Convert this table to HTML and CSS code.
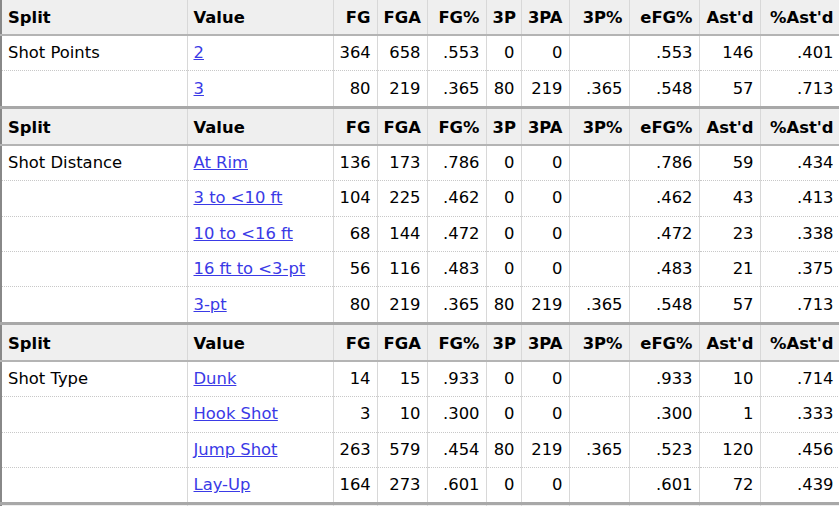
FILE: index.html
```html
<!DOCTYPE html>
<html>
<head>
<meta charset="utf-8">
<link rel="stylesheet" href="styles.css">
</head>
<body>
<table class="stats">
<colgroup>
<col class="c-split"><col class="c-value"><col class="c-fg"><col class="c-fga"><col class="c-fgp"><col class="c-3p"><col class="c-3pa"><col class="c-3pp"><col class="c-efg"><col class="c-ast"><col class="c-pct">
</colgroup>
<tbody>
<tr class="head first"><th class="l">Split</th><th class="l">Value</th><th>FG</th><th>FGA</th><th>FG%</th><th>3P</th><th>3PA</th><th>3P%</th><th>eFG%</th><th>Ast'd</th><th>%Ast'd</th></tr>
<tr><td class="l">Shot Points</td><td class="l"><a href="#">2</a></td><td>364</td><td>658</td><td>.553</td><td>0</td><td>0</td><td></td><td>.553</td><td>146</td><td>.401</td></tr>
<tr class="last"><td class="l"></td><td class="l"><a href="#">3</a></td><td>80</td><td>219</td><td>.365</td><td>80</td><td>219</td><td>.365</td><td>.548</td><td>57</td><td>.713</td></tr>
<tr class="head"><th class="l">Split</th><th class="l">Value</th><th>FG</th><th>FGA</th><th>FG%</th><th>3P</th><th>3PA</th><th>3P%</th><th>eFG%</th><th>Ast'd</th><th>%Ast'd</th></tr>
<tr><td class="l">Shot Distance</td><td class="l"><a href="#">At Rim</a></td><td>136</td><td>173</td><td>.786</td><td>0</td><td>0</td><td></td><td>.786</td><td>59</td><td>.434</td></tr>
<tr><td class="l"></td><td class="l"><a href="#">3 to &lt;10 ft</a></td><td>104</td><td>225</td><td>.462</td><td>0</td><td>0</td><td></td><td>.462</td><td>43</td><td>.413</td></tr>
<tr><td class="l"></td><td class="l"><a href="#">10 to &lt;16 ft</a></td><td>68</td><td>144</td><td>.472</td><td>0</td><td>0</td><td></td><td>.472</td><td>23</td><td>.338</td></tr>
<tr><td class="l"></td><td class="l"><a href="#">16 ft to &lt;3-pt</a></td><td>56</td><td>116</td><td>.483</td><td>0</td><td>0</td><td></td><td>.483</td><td>21</td><td>.375</td></tr>
<tr class="last"><td class="l"></td><td class="l"><a href="#">3-pt</a></td><td>80</td><td>219</td><td>.365</td><td>80</td><td>219</td><td>.365</td><td>.548</td><td>57</td><td>.713</td></tr>
<tr class="head"><th class="l">Split</th><th class="l">Value</th><th>FG</th><th>FGA</th><th>FG%</th><th>3P</th><th>3PA</th><th>3P%</th><th>eFG%</th><th>Ast'd</th><th>%Ast'd</th></tr>
<tr><td class="l">Shot Type</td><td class="l"><a href="#">Dunk</a></td><td>14</td><td>15</td><td>.933</td><td>0</td><td>0</td><td></td><td>.933</td><td>10</td><td>.714</td></tr>
<tr><td class="l"></td><td class="l"><a href="#">Hook Shot</a></td><td>3</td><td>10</td><td>.300</td><td>0</td><td>0</td><td></td><td>.300</td><td>1</td><td>.333</td></tr>
<tr><td class="l"></td><td class="l"><a href="#">Jump Shot</a></td><td>263</td><td>579</td><td>.454</td><td>80</td><td>219</td><td>.365</td><td>.523</td><td>120</td><td>.456</td></tr>
<tr class="last"><td class="l"></td><td class="l"><a href="#">Lay-Up</a></td><td>164</td><td>273</td><td>.601</td><td>0</td><td>0</td><td></td><td>.601</td><td>72</td><td>.439</td></tr>
<tr class="head tail"><th></th><th></th><th></th><th></th><th></th><th></th><th></th><th></th><th></th><th></th><th></th></tr>
</tbody>
</table>
</body>
</html>
```

FILE: styles.css
```css
html, body {
  margin: 0;
  padding: 0;
  background: #fff;
}
body {
  font-family: "DejaVu Sans", Verdana, sans-serif;
  font-size: 16.4px;
  color: #000;
  overflow: hidden;
}
.stats {
  border-collapse: collapse;
  table-layout: fixed;
  width: 840px;
  border-left: 2px solid #888;
}
.c-split { width: 186px; }
.c-value { width: 146px; }
.c-fg { width: 44px; }
.c-fga { width: 50px; }
.c-fgp { width: 59px; }
.c-3p { width: 35px; }
.c-3pa { width: 48px; }
.c-3pp { width: 60px; }
.c-efg { width: 70px; }
.c-ast { width: 61px; }
.c-pct { width: 80px; }
.stats td, .stats th {
  height: 34.4px;
  padding: 0 6px 0 6px;
  text-align: right;
  white-space: nowrap;
  border-right: 1px solid #d8d8d8;
  border-bottom: 1px dotted #c8c8c8;
  line-height: 20px;
  vertical-align: middle;
}
.stats th {
  height: 32px;
  padding-top: 3px;
  background: #efefef;
  font-weight: bold;
  border-bottom: 2px solid #b4b4b4;
  border-top: 3px solid #a8a8a8;
}
.stats tr.first th {
  border-top: 0;
  padding-top: 2px;
}
.stats .l {
  text-align: left;
}
.stats a {
  color: #3a3ae6;
  text-decoration: underline;
}
```
